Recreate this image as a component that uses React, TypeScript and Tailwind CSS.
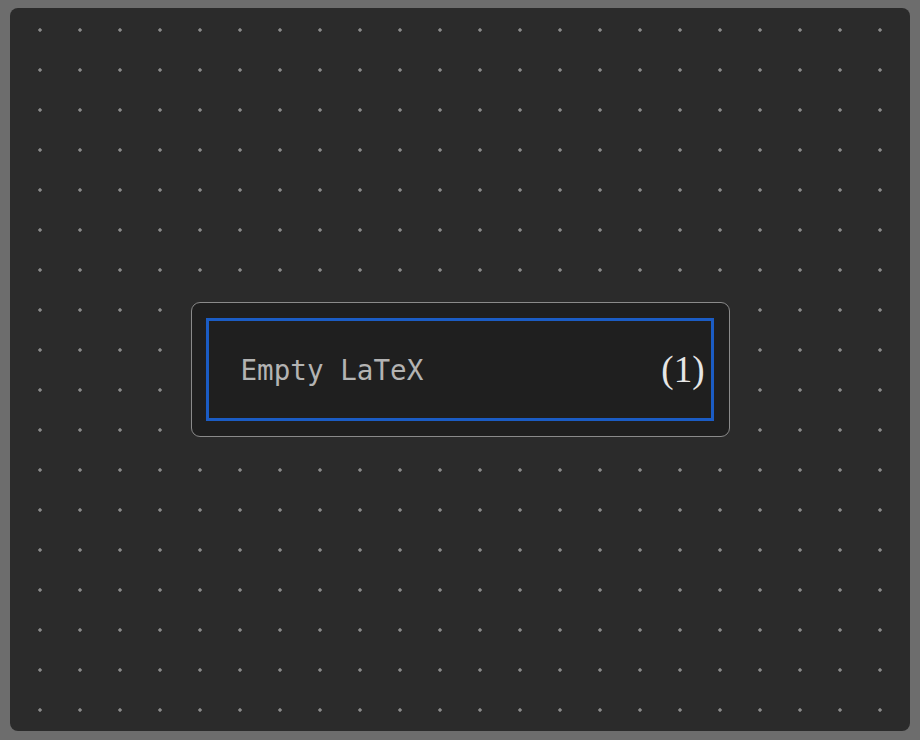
export default function App() {
  return (
    <div className="w-[920px] h-[740px] bg-[#6d6d6d] pt-[8px] px-[10px]">
      <div className="w-[900px] h-[723px] rounded-[8px] bg-[#2b2b2b] bg-[radial-gradient(circle,#8a8a8a_1.4px,transparent_2px)] bg-size-[40px_40px] bg-position-[10px_2px] flex items-center justify-center">
        <div className="w-[539px] h-[135px] rounded-[9px] border border-[#8a8a8a] bg-[#1f1f1f] pt-[15px] pb-[15px] pl-[14px] pr-[15px]">
          <div className="h-full border-[3px] border-[#1b5cc4] flex items-center justify-between pl-[32px] pr-[6px]">
            <span className="text-[27.6px] text-[#b3b3b3] font-['DejaVu_Sans_Mono',monospace] leading-none mt-[3px]">
              Empty LaTeX
            </span>
            <span className="text-[37px] text-[#e6e6e6] font-['Liberation_Serif',serif] leading-none">
              (1)
            </span>
          </div>
        </div>
      </div>
    </div>
  );
}
